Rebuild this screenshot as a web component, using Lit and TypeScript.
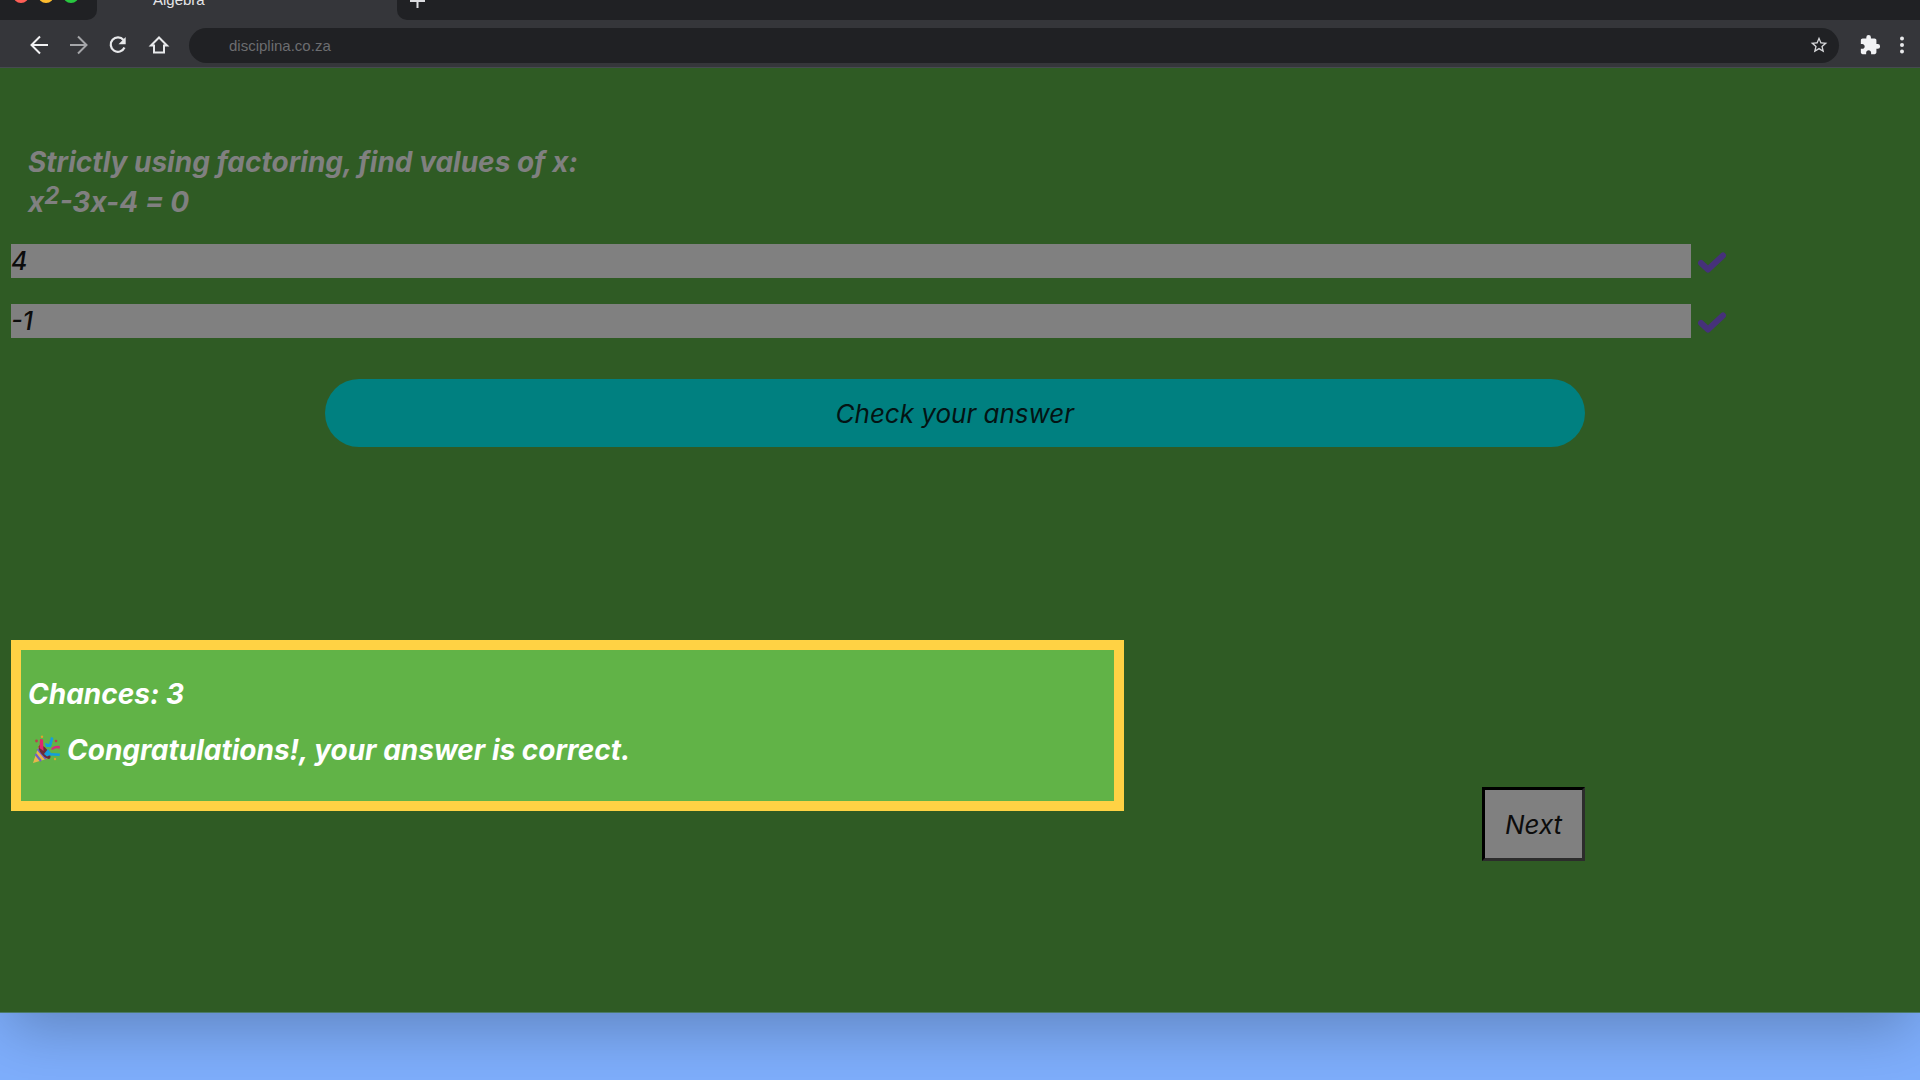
import { LitElement, html, css } from "lit";
import { customElement, state } from "lit/decorators.js";

@customElement("browser-bar")
class BrowserBar extends LitElement {
  static styles = css`
    :host {
      display: block;
      font-family: "Liberation Sans", Arial, sans-serif;
      font-size: 15px;
      font-style: normal;
    }
    .tabs {
      height: 20px;
      display: flex;
      align-items: flex-start;
      overflow: hidden;
      background: #35363a;
    }
    .lights {
      width: 97px;
      height: 20px;
      flex: none;
      background: #202124;
      border-bottom-right-radius: 10px;
    }
    .tab {
      width: 244px;
      flex: none;
      padding-left: 56px;
      color: #e4e5e7;
      line-height: 20px;
      margin-top: -10px;
    }
    .rest {
      flex: 1;
      height: 20px;
      background: #202124;
      border-bottom-left-radius: 10px;
    }
    .newtab {
      border: 0;
      padding: 0 0 0 13px;
      background: none;
      display: block;
    }
    .tools {
      height: 48px;
      display: flex;
      align-items: center;
      box-sizing: border-box;
      padding: 3px 9px 0 24px;
      background: #35363a;
      border-bottom: 1px solid #464a50;
    }
    .icon {
      width: 30px;
      height: 30px;
      margin-right: 10px;
      padding: 0;
      border: 0;
      background: none;
      flex: none;
    }
    svg {
      display: block;
    }
    .address {
      flex: 1;
      height: 35px;
      margin-left: 5px;
      display: flex;
      align-items: center;
      padding: 0 10px 0 40px;
      border-radius: 18px;
      background: #202124;
    }
    .url {
      flex: 1;
      border: 0;
      padding: 0;
      background: none;
      color: #6c6d70;
      font: inherit;
      outline: 0;
    }
    .star,
    .ext,
    .more {
      padding: 0;
      border: 0;
      background: none;
      flex: none;
    }
    .ext {
      margin-left: 20px;
    }
    .more {
      margin-left: 12px;
    }
  `;

  render() {
    return html`
      <div class="tabs">
        <div class="lights">
          <svg width="97" height="20">
            <circle cx="21" cy="-5" r="8" fill="#ff5f57" />
            <circle cx="46" cy="-5" r="8" fill="#febc2e" />
            <circle cx="71" cy="-5" r="8" fill="#28c840" />
          </svg>
        </div>
        <div class="tab">Algebra</div>
        <div class="rest">
          <button class="newtab" aria-label="New tab">
            <svg width="16" height="20" fill="none" stroke="#dcdde0" stroke-width="2">
              <path d="M0 1H15M7.500 -7V8" />
            </svg>
          </button>
        </div>
      </div>
      <div class="tools">
        <button class="icon" aria-label="Back">
          <svg width="30" height="30" fill="none" stroke="#f1f1f3" stroke-width="2">
            <path d="M24 15H8M16 6.500L7.500 15L16 23.500" />
          </svg>
        </button>
        <button class="icon" aria-label="Forward">
          <svg width="30" height="30" fill="none" stroke="#a5a6a9" stroke-width="2">
            <path d="M6 15H22M14 6.500L22.500 15L14 23.500" />
          </svg>
        </button>
        <button class="icon" aria-label="Reload">
          <svg width="30" height="30" fill="none" stroke="#e8e9eb" stroke-width="2.200">
            <path d="M19.500 10A7.200 7.200 0 1 0 20.500 17.500" />
            <path d="M21.700 7V14.200H14.500Z" fill="#e8e9eb" stroke="none" />
          </svg>
        </button>
        <button class="icon" aria-label="Home">
          <svg width="30" height="30" fill="none" stroke="#e8e9eb" stroke-width="2">
            <path d="M7 15.500L15 7.500L23 15.500H20V22.500H10V15.500Z" />
          </svg>
        </button>
        <div class="address">
          <input class="url" aria-label="Address" value="disciplina.co.za" />
          <button class="star" aria-label="Bookmark">
            <svg width="20" height="20" viewBox="0 0 24 24" fill="#d5d6d9">
              <path
                d="M22 9.240l-7.190-.620L12 2 9.190 8.630 2 9.240l5.460 4.730L5.820 21 12 17.270 18.180 21l-1.630-7.030L22 9.240zM12 15.400l-3.760 2.270 1-4.280-3.320-2.880 4.380-.380L12 6.100l1.710 4.040 4.380.380-3.320 2.880 1 4.280L12 15.400z"
              />
            </svg>
          </button>
        </div>
        <button class="ext" aria-label="Extensions">
          <svg width="22" height="22" viewBox="0 0 24 24" fill="#f1f2f4">
            <path
              d="M20.500 11H19V7c0-1.100-.900-2-2-2h-4V3.500a2.500 2.500 0 0 0-5 0V5H4c-1.100 0-1.990.900-1.990 2v3.800H3.500c1.490 0 2.700 1.210 2.700 2.700s-1.210 2.700-2.700 2.700H2V20c0 1.100.900 2 2 2h3.800v-1.500c0-1.490 1.210-2.700 2.700-2.700s2.700 1.210 2.700 2.700V22H17c1.100 0 2-.900 2-2v-4h1.500a2.500 2.500 0 0 0 0-5z"
            />
          </svg>
        </button>
        <button class="more" aria-label="Menu">
          <svg width="18" height="20" fill="#e8e9eb">
            <circle cx="9" cy="3.500" r="2" />
            <circle cx="9" cy="10" r="2" />
            <circle cx="9" cy="16.500" r="2" />
          </svg>
        </button>
      </div>
    `;
  }
}

@customElement("app-root")
class AppRoot extends LitElement {
  static styles = css`
    :host {
      display: flex;
      flex-direction: column;
      box-sizing: border-box;
      min-height: 100vh;
      padding-bottom: 67px;
      overflow: hidden;
      background: #7eaefc;
      font-family: Inter, "Open Sans", sans-serif;
      font-style: italic;
    }
    .window {
      flex: 1;
      display: flex;
      flex-direction: column;
      box-shadow: 0 24px 56px -8px rgba(0, 0, 0, 0.24);
    }
    .lesson {
      flex: 1;
      display: flex;
      flex-direction: column;
      padding: 74px 8px 0 11px;
      background: #2f5b24;
      border-bottom: 1px solid #4b7a68;
    }
    .question {
      margin: 0 0 22px 17px;
      color: #808080;
      font-size: 28px;
      font-weight: 700;
      line-height: 40px;
    }
    .question sup {
      font-size: 24px;
      line-height: 0;
      vertical-align: 8px;
    }
    .row {
      display: flex;
      align-items: center;
      gap: 6px;
      height: 34px;
      margin-bottom: 26px;
    }
    .answer {
      width: 88.400%;
      height: 34px;
      box-sizing: border-box;
      border: 0;
      border-radius: 0;
      padding: 0;
      background: #808080;
      color: #0c0c0c;
      font: inherit;
      font-size: 25px;
      font-weight: 500;
    }
    .tick {
      margin-top: 4px;
    }
    .check {
      width: 66.300%;
      height: 68px;
      margin: 15px 0 193px 16.500%;
      border: 0;
      border-radius: 34px;
      background: #008080;
      color: #041414;
      font: inherit;
      font-size: 26px;
    }
    .footer {
      display: flex;
      justify-content: space-between;
      align-items: flex-end;
      padding-right: 17.200%;
    }
    .feedback {
      box-sizing: border-box;
      width: 70.700%;
      margin-bottom: 50px;
      padding: 16px 7px 23px;
      border: 10px solid #ffd244;
      background: #61b347;
      color: #fff;
      font-size: 28px;
      font-weight: 700;
      line-height: 56px;
    }
    .feedback p {
      margin: 0;
      display: flex;
      align-items: center;
    }
    .party {
      margin: 0 5px 0 4px;
    }
    .next {
      padding: 0;
      width: 103px;
      height: 74px;
      border: 3px solid;
      border-color: #000 #2c2c2c #2c2c2c #000;
      background: #808080;
      color: #0c0c0c;
      font: inherit;
      font-size: 26px;
    }
  `;

  @state() private answers = ["4", "-1"];
  @state() private chances = 3;

  render() {
    return html`
      <div class="window">
        <browser-bar></browser-bar>
        <main class="lesson">
          <div class="question">
            Strictly using factoring, find values of x:<br />x<sup>2</sup>-3x-4 = 0
          </div>
          ${this.answers.map(
            (a, i) => html`
              <div class="row">
                <input class="answer" aria-label="Value ${i + 1} of x" .value=${a} />
                <svg class="tick" width="30" height="24" fill="none" stroke="#46317a" stroke-width="6" stroke-linecap="round" stroke-linejoin="round">
                  <path d="M4 12L11 18.500L26 4.500" />
                </svg>
              </div>
            `
          )}
          <button class="check">Check your answer</button>
          <div class="footer">
            <section class="feedback">
              <p>Chances: ${this.chances}</p>
              <p>
                <svg class="party" width="30" height="30" viewBox="0 0 30 30">
                  <path d="M1 28L7 10Q15 15 18 23Z" fill="#e8b54c" />
                  <path d="M3.500 19L9 26M5.500 14L14 24" stroke="#6c62c8" stroke-width="2.200" />
                  <ellipse cx="12.500" cy="17" rx="3.500" ry="8.500" transform="rotate(-40 12.500 17)" fill="#6b2c35" />
                  <path d="M8 4L11 4.500L11.500 16L7.500 13Z" fill="#e0246e" />
                  <path d="M13 8L17 9L19 2L21.500 3L19 12L14 12Z" fill="#149edb" />
                  <path d="M12 19L16 14L19 18L28 18.500L27.500 21L17 20.500L15 21.500Z" fill="#149edb" />
                  <path d="M19 14Q22 10 28 11L27.500 14Q24 12 20.500 15Z" fill="#d52c7c" />
                  <circle cx="10" cy="1.800" r="1.200" fill="#dfa32c" />
                  <circle cx="23" cy="24" r="1.200" fill="#dfa32c" />
                  <circle cx="4.500" cy="6" r="1.400" fill="#bb3d50" />
                  <circle cx="24" cy="6" r="1.300" fill="#bb3d50" />
                </svg>
                Congratulations!, your answer is correct.
              </p>
            </section>
            <button class="next">Next</button>
          </div>
        </main>
      </div>
    `;
  }
}
